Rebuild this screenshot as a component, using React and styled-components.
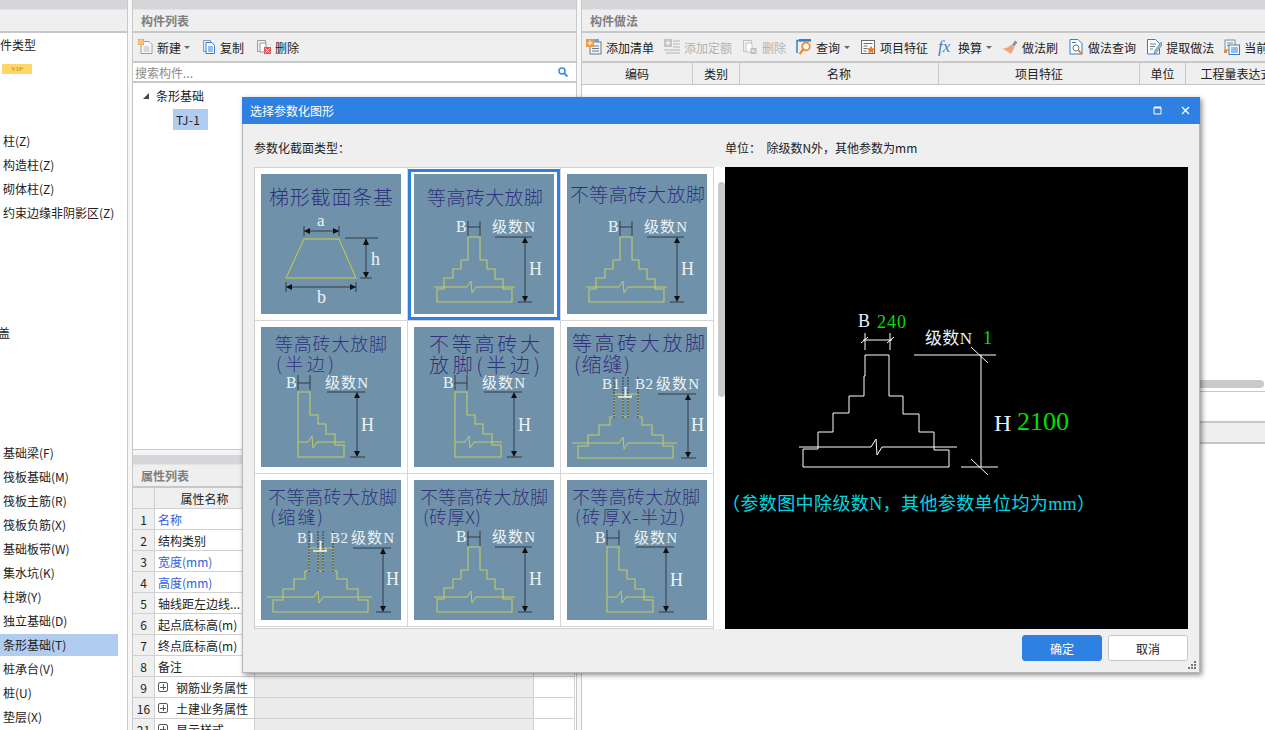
import React from 'react'
import styled, { createGlobalStyle } from 'styled-components'

const GlobalStyle = createGlobalStyle`
  html, body {
    margin: 0;
    padding: 0;
    background: #fff;
    overflow: hidden;
  }
  body {
    font-family: "Noto Sans CJK SC", sans-serif;
    font-size: 12px;
    color: #222;
  }
  * {
    box-sizing: border-box;
  }
`

/* ---------- toolbar icons ---------- */

const Ico = ({ children, w = 16 }) => (
  <svg width={w} height="16" viewBox="0 0 16 16" fill="none">{children}</svg>
)

const icons = {
  newDoc: (
    <Ico>
      <path d="M3 2.5h8l3 3v9H3z" fill="#fafafa" stroke="#9a9a9a" />
      <path d="M5.5 8h6M5.5 10h6M5.5 12h6" stroke="#b5b5b5" />
      <rect x="0" y="0" width="6" height="6" fill="#f29a2e" />
      <path d="M0 2h6M2 0v6M4 0v6M0 4h6" stroke="#fde3b5" strokeWidth=".7" />
    </Ico>
  ),
  copy: (
    <Ico>
      <path d="M1.5 1.5h7v11h-7z" fill="#eee" stroke="#8a9aac" />
      <path d="M4 3.5h6l2.5 3v8H4z" fill="#fff" stroke="#2f7fd6" />
      <path d="M6 8h5M6 10h5M6 12h5" stroke="#2f7fd6" />
    </Ico>
  ),
  del: (
    <Ico>
      <path d="M1.5 1.5h8v11h-8z" fill="#f2f2f2" stroke="#999" />
      <path d="M4 4h6v9H4z" fill="#fff" stroke="#999" />
      <rect x="8" y="8" width="7" height="7" fill="#e2575a" />
      <path d="M9.5 9.5l4 4M13.5 9.5l-4 4" stroke="#fff" />
    </Ico>
  ),
  addList: (
    <Ico>
      <rect x="4" y="3" width="11" height="12" fill="#f4f4f4" stroke="#6b7a88" />
      <path d="M6 7h7M6 9.500h7M6 12h7" stroke="#6b7a88" />
      <rect x="0" y="0" width="8" height="8" fill="#ef9a3c" />
      <rect x="8" y="0" width="5" height="3" fill="#6ea4dd" />
      <path d="M4 1.500v5M1.500 4h5" stroke="#fff" />
    </Ico>
  ),
  addQuota: (
    <Ico>
      <rect x="0" y="0" width="8" height="8" fill="#c4c4c4" />
      <path d="M4 1.500v5M1.500 4h5" stroke="#fff" />
      <path d="M9 2h7M9 5h7M9 8h7M0 11h16M2 14h14" stroke="#c9c9c9" strokeWidth="1.300" />
    </Ico>
  ),
  delOff: (
    <Ico>
      <path d="M1.500 1.500h8v11h-8z" fill="#f2f2f2" stroke="#c2c2c2" />
      <path d="M4 4h6v9H4z" fill="#fff" stroke="#c2c2c2" />
      <rect x="8.500" y="9" width="6" height="6" fill="#bbb" />
      <path d="M10 10.500l3 3M13 10.500l-3 3" stroke="#fff" />
    </Ico>
  ),
  query: (
    <Ico>
      <path d="M1 14V1.500h14" stroke="#2f7fd6" strokeWidth="1.500" />
      <rect x="3" y="0" width="12" height="2.500" fill="#2f7fd6" />
      <circle cx="10" cy="7.500" r="3.800" fill="#fff" stroke="#ee8a2c" strokeWidth="1.800" />
      <path d="M7.200 10.500L3.500 15" stroke="#ee8a2c" strokeWidth="2.200" />
    </Ico>
  ),
  feature: (
    <Ico>
      <rect x="1.500" y="1.500" width="13" height="13" fill="#fff" stroke="#6b6b6b" />
      <path d="M3.500 4.500h9M3.500 7h4M3.500 9.500h4M3.500 12h3" stroke="#6b6b6b" />
      <path d="M11 6.500l1.300 2.800 3 .3-2.200 2 .6 3-2.700-1.500-2.700 1.500.6-3-2.200-2 3-.3z" fill="#ee7a22" />
    </Ico>
  ),
  brush: (
    <Ico>
      <path d="M10 6l3-4.500 2.500 2L12 7.500z" fill="#8a8f96" />
      <path d="M9.500 5.500l3 3-3.500 6.500C6 13 3 11 .5 9.500 4 9.500 7 8 9.500 5.500z" fill="#f4a27a" />
    </Ico>
  ),
  lawQuery: (
    <Ico>
      <path d="M2 .5h8l4 4V15H2z" fill="#fff" stroke="#2f7fd6" />
      <path d="M4 3.500h4" stroke="#2f7fd6" />
      <circle cx="8" cy="9" r="3" stroke="#5d7890" />
      <path d="M10 11l2 2" stroke="#ee8a2c" strokeWidth="2" />
      <circle cx="13" cy="14" r="1.800" fill="#ee8a2c" />
    </Ico>
  ),
  extract: (
    <Ico>
      <path d="M1.500 .5h8l4 4V15h-12z" fill="#fff" stroke="#2f7fd6" />
      <path d="M4 5h6M4 7.500h5M4 10h3" stroke="#6b7a88" />
      <path d="M15.500 3L9 11l-1 4 3-2 5-7z" fill="#8ac0d8" stroke="#5d7890" strokeWidth=".6" />
    </Ico>
  ),
  current: (
    <Ico>
      <rect x="1" y="1" width="10" height="10" fill="#f4f4f4" stroke="#8a8a8a" />
      <path d="M3 4h6M3 6.500h3" stroke="#8a8a8a" />
      <rect x="5" y="6" width="10.500" height="9.500" fill="#fff" stroke="#2f7fd6" />
      <path d="M7 9h7M7 11h7M7 13h7" stroke="#2f7fd6" />
      <rect x="0" y="11" width="3" height="3" fill="#ee8a2c" />
    </Ico>
  ),
}

/* ---------- page frame ---------- */

const Page = styled.div`
  position: relative;
  display: flex;
  width: 1265px;
  height: 730px;
  overflow: hidden;
  background: #fff;
`

const Pane = styled.section`
  display: flex;
  flex-direction: column;
  flex: ${(p) => (p.$width ? `0 0 ${p.$width}px` : '1 1 auto')};
  min-width: 0;
  height: 100%;
  overflow: hidden;
  border-right: ${(p) => (p.$edge ? '1px solid #c8c8c8' : 'none')};
  border-left: ${(p) => (p.$edgeLeft ? '1px solid #c8c8c8' : 'none')};
`

const Splitter = styled.div`
  flex: 0 0 ${(p) => p.$width}px;
  background: #f7f7f7;
`

const Band = styled.div`
  flex: 0 0 ${(p) => p.$height || 9}px;
  background: #d4d6da;
`

const PanelTitle = styled.div`
  flex: 0 0 24px;
  display: flex;
  align-items: center;
  padding-left: 8px;
  background: #efefef;
  border-top: 1px solid #e4e4e4;
  border-bottom: 2px solid #c8c8c8;
  color: #7f7f7f;
  font-weight: 700;
  font-size: 12px;
`

/* ---------- left list ---------- */

const SideList = styled.ul`
  list-style: none;
  margin: 0;
  padding: 0;
`

const SideRow = styled.li`
  display: flow-root;
  height: 24px;
  width: 118px;
  padding-left: 3px;
  line-height: 24px;
  text-indent: ${(p) => p.$indent || 0}px;
  white-space: nowrap;
  background: ${(p) => (p.$active ? 'linear-gradient(#fff 0 1px, #b0ccee 1px 23px, #fff 23px)' : 'none')};
`

const Vip = styled.span`
  display: flex;
  align-items: center;
  justify-content: center;
  width: 30px;
  height: 10px;
  margin: 7px 0 0 -1px;
  background: #fdd768;
  color: #c9a03c;
  font-family: "Liberation Serif", serif;
  font-size: 7px;
  font-weight: 700;
  text-indent: 0;
  line-height: 10px;
`

/* ---------- toolbar ---------- */

const Toolbar = styled.div`
  flex: 0 0 ${(p) => p.$height || 30}px;
  display: flex;
  align-items: center;
  gap: ${(p) => p.$gap || 10}px;
  padding-left: ${(p) => p.$pad || 4}px;
  background: #efefef;
  border-bottom: 2px solid #c8c8c8;
  white-space: nowrap;
`

const Tool = styled.span`
  display: inline-flex;
  align-items: center;
  gap: ${(p) => p.$gap || 4}px;
  color: ${(p) => (p.$off ? '#b2b2b2' : '#222')};
`

const Caret = styled.i`
  display: inline-block;
  width: 0;
  height: 0;
  border-left: 3px solid transparent;
  border-right: 3px solid transparent;
  border-top: 3px solid #666;
`

const FxMark = styled.span`
  width: 16px;
  color: #3f80c8;
  font-family: "Liberation Serif", serif;
  font-style: italic;
  font-size: 17px;
  line-height: 16px;
`

/* ---------- middle pane ---------- */

const SearchBar = styled.div`
  flex: 0 0 20px;
  display: flex;
  align-items: center;
  justify-content: space-between;
  padding: 0 8px 0 2px;
  border-bottom: 2px solid #c8c8c8;
  color: #8a8a8a;
`

const Tree = styled.div`
  flex: 0 0 367px;
  padding: 2px 0 0 10px;
  border-bottom: 1px solid #c8c8c8;
`

const TreeRoot = styled.div`
  display: flex;
  align-items: center;
  gap: 7px;
  height: 21px;
`

const TreeArrow = styled.i`
  display: inline-block;
  width: 0;
  height: 0;
  margin-top: 1px;
  border-left: 6px solid transparent;
  border-bottom: 6px solid #444;
`

const TreeLeaf = styled.div`
  display: flex;
  align-items: center;
  width: 35px;
  height: 21px;
  margin: 3px 0 0 30px;
  padding-left: 3px;
  background: #b0ccee;
  letter-spacing: .4px;
`

const PaneGap = styled.div`
  flex: 0 0 5px;
  background: #f4f4f4;
`

const PropTable = styled.div`
  display: grid;
  grid-template-columns: 22px 100px 279px 41px;
  grid-auto-rows: 21px;
`

const PropCell = styled.div`
  display: flex;
  align-items: center;
  gap: 8px;
  justify-content: ${(p) => (p.$center ? 'center' : 'flex-start')};
  padding-left: ${(p) => (p.$center ? 0 : 3)}px;
  background: ${(p) => p.$bg || '#fff'};
  color: ${(p) => p.$color || '#222'};
  border-right: 1px solid #d0d0d0;
  border-bottom: 1px solid #d0d0d0;
  white-space: nowrap;
  overflow: hidden;
`

const PlusBox = styled.i`
  flex: 0 0 10px;
  height: 10px;
  border: 1px solid #555;
  border-radius: 2px;
  background:
    linear-gradient(#555, #555) center / 6px 1px no-repeat,
    linear-gradient(#555, #555) center / 1px 6px no-repeat;
`

/* ---------- right pane ---------- */

const GridHead = styled.div`
  flex: 0 0 22px;
  display: grid;
  grid-template-columns: 111px 47px 199px 201px 46px 102px;
  background: #efefef;
  border-bottom: 1px solid #c8c8c8;
`

const HeadCell = styled.div`
  display: flex;
  align-items: center;
  justify-content: center;
  border-right: 1px solid #c8c8c8;
  white-space: nowrap;
`

const GridBody = styled.div`
  flex: 0 0 295px;
`

const ScrollTrack = styled.div`
  flex: 0 0 12px;
  padding-right: 1px;
  border-bottom: 1px solid #c8c8c8;
`

const ScrollThumb = styled.div`
  height: 8px;
  background: #cacaca;
  border-radius: 4px;
`

const SubBody = styled.div`
  flex: 0 0 29px;
`

const SubBand = styled.div`
  flex: 0 0 23px;
  background: #efefef;
  border-top: 2px solid #c5c9cc;
  border-bottom: 2px solid #c8c8c8;
`

/* ---------- dialog ---------- */

const Dialog = styled.div`
  position: absolute;
  left: 242px;
  top: 97px;
  width: 958px;
  height: 576px;
  display: flex;
  flex-direction: column;
  background: #efefef;
  border: 1px solid #b4b8be;
  border-top: none;
  box-shadow: 2px 2px 5px rgba(0, 0, 0, .45);
`

const DialogHead = styled.header`
  flex: 0 0 27px;
  display: flex;
  align-items: center;
  margin: 0 -1px;
  padding: 0 9px 0 8px;
  background: #2f80e3;
  color: #fff;
`

const DialogTitle = styled.span`
  flex: 1;
`

const WinButton = styled.span`
  display: flex;
  align-items: center;
  justify-content: center;
  width: 12px;
  margin-left: 16px;
`

const DialogLabels = styled.div`
  flex: 0 0 43px;
  display: grid;
  grid-template-columns: 471px 1fr;
  align-items: center;
  padding: 4px 11px 0;
`

const DialogMain = styled.div`
  flex: 0 0 462px;
  display: grid;
  grid-template-columns: 471px 463px;
  padding-left: 11px;
`

const Picker = styled.div`
  display: flex;
  background: #fff;
`

const PickerGrid = styled.div`
  display: grid;
  grid-template-columns: repeat(3, 153px);
  grid-auto-rows: 153px;
  align-content: start;
  width: 460px;
  height: 462px;
  border: 1px solid #cfcfcf;
  border-bottom-width: 3px;
  border-bottom-style: double;
`

const PickerCell = styled.div`
  padding-top: 1px;
  border-right: 1px solid #d6d6d6;
  border-bottom: 1px solid #d6d6d6;
`

const PickerFrame = styled.div`
  width: 152px;
  height: 151px;
  padding: 2px 3px 0;
  border: 3px solid ${(p) => (p.$selected ? '#2f7fe0' : 'transparent')};
  svg {
    display: block;
  }
`

const PickerScroll = styled.div`
  flex: 0 0 11px;
  padding: 15px 0 0 4px;
`

const PickerThumb = styled.div`
  width: 7px;
  height: 215px;
  background: #cacaca;
  border-radius: 4px;
`

const Preview = styled.svg`
  display: block;
  background: #000;
`

const DialogFoot = styled.footer`
  position: relative;
  flex: 1;
  display: flex;
  justify-content: flex-end;
  gap: 6px;
  padding: 6px 11px 0 0;
`

const Btn = styled.button`
  width: 80px;
  height: 26px;
  padding: 0;
  font: inherit;
  font-size: 12px;
  color: ${(p) => (p.$primary ? '#fff' : '#222')};
  background: ${(p) => (p.$primary ? '#2f80e3' : '#fff')};
  border: 1px solid ${(p) => (p.$primary ? '#2f80e3' : '#c8c8c8')};
  border-radius: 3px;
`

const Grip = styled.svg`
  position: absolute;
  right: 2px;
  bottom: 2px;
`

/* ---------- svg text ---------- */

const ThumbTitle = styled.text`
  font-family: "Noto Sans CJK SC", sans-serif;
  font-size: ${(p) => p.$size || 18}px;
  font-weight: 300;
  fill: #2c2a78;
  fill-opacity: .94;
`

const ThumbLabel = styled.text`
  font-family: "Liberation Serif", "Noto Sans CJK SC", serif;
  font-size: ${(p) => p.$size || 15}px;
  fill: #eef2f4;
`

const CadLabel = styled.text`
  font-family: "Liberation Serif", "Noto Sans CJK SC", serif;
  font-size: ${(p) => p.$size || 18}px;
  fill: ${(p) => p.$color || '#e6f0f8'};
`

/* ---------- thumbnails ---------- */

const LINE = '#c3cb62'
const DIM = '#2f3a44'

const shift = (pts, dx, dy) => pts.map(([x, y]) => `${x + dx},${y + dy}`).join(' ')

const FULL = [[54, 63], [54, 86], [47, 86], [47, 95], [39, 95], [39, 104], [30, 104], [30, 115], [23, 115], [23, 128], [98, 128], [98, 115], [89, 115], [89, 105], [81, 105], [81, 95], [73, 95], [73, 86], [66, 86], [66, 63]]
const HALF = [[41, 65], [41, 130], [87, 130], [87, 118], [78, 118], [78, 107], [69, 107], [69, 97], [61, 97], [61, 88], [53, 88], [53, 65]]
const GAP = [[47, 67], [47, 90], [43, 90], [43, 98], [32, 98], [32, 108], [21, 108], [21, 119], [11, 119], [11, 131], [106, 131], [106, 119], [96, 119], [96, 108], [85, 108], [85, 98], [75, 98], [75, 90], [71, 90], [71, 67]]

const Level = ({ x, top, bottom, left, right }) => (
  <g stroke={DIM}>
    <path d={`M${x} ${top + 2}V${bottom - 2}`} />
    <path d={`M${left} ${bottom}H${right}`} />
    <path d={`M${x - 3} ${top + 6}L${x} ${top}L${x + 3} ${top + 6}z`} fill="#111" stroke="none" />
    <path d={`M${x - 3} ${bottom - 6}L${x} ${bottom}L${x + 3} ${bottom - 6}z`} fill="#111" stroke="none" />
  </g>
)

const BreakLine = ({ from, to, at, y }) => (
  <polyline
    points={`${from},${y} ${at - 3},${y} ${at + 1},${y - 6} ${at + 2},${y + 6} ${at + 6},${y} ${to},${y}`}
    fill="none"
    stroke={LINE}
  />
)

const FullDrawing = ({ dx = 0, dy = 0 }) => (
  <g>
    <polygon points={shift(FULL, dx, dy)} fill="none" stroke={LINE} strokeWidth="1.100" />
    <BreakLine from={20 + dx} to={101 + dx} at={56 + dx} y={113 + dy} />
    <path d={`M${54 + dx} ${47 + dy}V${62 + dy}M${66 + dx} ${47 + dy}V${62 + dy}M${54 + dx} ${53 + dy}H${66 + dx}`} stroke={DIM} fill="none" />
    <ThumbLabel x={42 + dx} y={58 + dy} $size={16}>B</ThumbLabel>
    <ThumbLabel x={78 + dx} y={58 + dy} textLength="43" $size={15}>级数N</ThumbLabel>
    <path d={`M${81 + dx} ${63 + dy}H${118 + dx}`} stroke={DIM} />
    <Level x={111 + dx} top={63 + dy} bottom={128 + dy} left={104 + dx} right={118 + dx} />
    <ThumbLabel x={115 + dx} y={101 + dy} $size={18}>H</ThumbLabel>
  </g>
)

const HalfDrawing = ({ dx = 0, dy = 0 }) => (
  <g>
    <polygon points={shift(HALF, dx, dy)} fill="none" stroke={LINE} strokeWidth="1.100" />
    <BreakLine from={41 + dx} to={88 + dx} at={54 + dx} y={115 + dy} />
    <path d={`M${41 + dx} ${48 + dy}V${63 + dy}M${53 + dx} ${48 + dy}V${63 + dy}M${41 + dx} ${56 + dy}H${53 + dx}`} stroke={DIM} fill="none" />
    <ThumbLabel x={29 + dx} y={61 + dy} $size={16}>B</ThumbLabel>
    <ThumbLabel x={68 + dx} y={61 + dy} textLength="43" $size={15}>级数N</ThumbLabel>
    <path d={`M${70 + dx} ${65 + dy}H${108 + dx}`} stroke={DIM} />
    <Level x={100 + dx} top={65 + dy} bottom={130 + dy} left={93 + dx} right={108 + dx} />
    <ThumbLabel x={104 + dx} y={104 + dy} $size={18}>H</ThumbLabel>
  </g>
)

const GapDrawing = ({ dx = 0, dy = 0 }) => (
  <g>
    <polygon points={shift(GAP, dx, dy)} fill="none" stroke={LINE} strokeWidth="1.100" />
    <polygon points={shift([[56, 67], [56, 90], [61, 90], [61, 67]], dx, dy)} fill="none" stroke={LINE} />
    <BreakLine from={5 + dx} to={110 + dx} at={55 + dx} y={116 + dy} />
    <path d={`M${47 + dx} ${50 + dy}V${92 + dy}M${56 + dx} ${50 + dy}V${92 + dy}M${61 + dx} ${50 + dy}V${92 + dy}M${71 + dx} ${50 + dy}V${92 + dy}`} stroke={DIM} strokeDasharray="2 1" />
    <path d={`M${51 + dx} ${70 + dy}H${65 + dx}`} stroke="#fff" strokeWidth="1.300" />
    <ThumbLabel x={35 + dx} y={62 + dy} textLength="18" $size={15}>B1</ThumbLabel>
    <ThumbLabel x={68 + dx} y={62 + dy} textLength="18" $size={15}>B2</ThumbLabel>
    <ThumbLabel x={56 + dx} y={70 + dy} $size={15}>L</ThumbLabel>
    <ThumbLabel x={89 + dx} y={62 + dy} textLength="43" $size={15}>级数N</ThumbLabel>
    <path d={`M${91 + dx} ${67 + dy}H${129 + dx}`} stroke={DIM} />
    <Level x={121 + dx} top={67 + dy} bottom={131 + dy} left={114 + dx} right={129 + dx} />
    <ThumbLabel x={124 + dx} y={104 + dy} $size={18}>H</ThumbLabel>
  </g>
)

const TrapDrawing = () => (
  <g>
    <polygon points="43,65 78,65 95,104 25,104" fill="none" stroke="#cdd040" />
    <path d="M43 52V62M78 52V62M43 57H78M84 64H117M99 104H111M25 108V118M95 108V118M25 113H95" stroke={DIM} fill="none" />
    <path d="M105 66V103" stroke={DIM} />
    <path d="M102 71L105 64L108 71zM102 98L105 104L108 98zM43 57L49 54V60zM78 57L72 54V60zM25 113L31 110V116zM95 113L89 110V116z" fill="#111" />
    <ThumbLabel x={56} y={52} $size={17}>a</ThumbLabel>
    <ThumbLabel x={110} y={91} $size={18}>h</ThumbLabel>
    <ThumbLabel x={56} y={129} $size={18}>b</ThumbLabel>
  </g>
)

const DRAWINGS = { trap: TrapDrawing, full: FullDrawing, half: HalfDrawing, gap: GapDrawing }

const THUMBS = [
  { kind: 'trap', lines: [['梯形截面条基', 8, 31, 124, 20]] },
  { kind: 'full', selected: true, lines: [['等高砖大放脚', 13, 31, 116, 19]] },
  { kind: 'full', dx: -1, lines: [['不等高砖大放脚', 3, 28, 135, 19]] },
  { kind: 'half', dx: -4, lines: [['等高砖大放脚', 14, 24, 112, 18], ['(半边)', 15, 44, 58, 18]] },
  { kind: 'half', lines: [['不等高砖大', 15, 25, 111, 20], ['放脚(半边)', 15, 46, 111, 20]] },
  { kind: 'gap', lines: [['等高砖大放脚', 5, 24, 133, 20], ['(缩缝)', 7, 45, 56, 20]] },
  { kind: 'gap', dx: 1, dy: 1, lines: [['不等高砖大放脚', 7, 24, 129, 18], ['(缩缝)', 9, 44, 53, 18]] },
  { kind: 'full', dy: 4, lines: [['不等高砖大放脚', 6, 24, 128, 18], ['(砖厚X)', 9, 44, 58, 18]] },
  { kind: 'half', dx: -1, dy: 2, lines: [['不等高砖大放脚', 5, 24, 128, 18], ['(砖厚X-半边)', 8, 44, 110, 18]] },
]

const Thumb = ({ kind, dx, dy, lines }) => {
  const Drawing = DRAWINGS[kind]
  return (
    <svg width="140" height="140" viewBox="0 0 140 140">
      <rect width="140" height="140" fill="#6f92aa" />
      {lines.map(([text, x, y, w, size]) => (
        <ThumbTitle key={text} x={x} y={y} textLength={w} lengthAdjust="spacing" $size={size}>{text}</ThumbTitle>
      ))}
      <Drawing dx={dx} dy={dy} />
    </svg>
  )
}

const CadPreview = () => (
  <Preview width="463" height="462" viewBox="0 0 463 462">
    <g stroke="#fff" fill="none">
      <polygon points="140,188 140,209 139,209 139,229 124,229 124,246 108,246 108,265 93,265 93,282 78,282 78,300 224,300 224,283 209,283 209,265 194,265 194,247 178,247 178,229 164,229 164,188" />
      <polyline points="74,280 146,280 151,272 152,288 157,280 232,280" />
      <path d="M140 166V183M165 166V183M138 173H167M136 176L143 170M162 176L169 170" />
      <path d="M189 188H271M256 188V300M236 300H273M246 180L263 196M246 292L263 308" />
    </g>
    <CadLabel x={133} y={160} $size={18}>B</CadLabel>
    <CadLabel x={152} y={161} $size={18} textLength="29" $color="#00e000">240</CadLabel>
    <CadLabel x={200} y={177} $size={17} textLength="47">级数N</CadLabel>
    <CadLabel x={258} y={177} $size={18} $color="#00e000">1</CadLabel>
    <CadLabel x={269} y={264} $size={24}>H</CadLabel>
    <CadLabel x={292} y={263} $size={26} textLength="52" $color="#00e000">2100</CadLabel>
    <CadLabel x={-3} y={343} $size={18} textLength="373" lengthAdjust="spacing" $color="#00d8e0">（参数图中除级数N，其他参数单位均为mm）</CadLabel>
  </Preview>
)

/* ---------- data ---------- */

const SIDE = [
  { text: '构件类型', indent: -15 },
  { vip: true },
  {}, {},
  { text: '柱(Z)' },
  { text: '构造柱(Z)' },
  { text: '砌体柱(Z)' },
  { text: '约束边缘非阴影区(Z)' },
  {}, {}, {}, {},
  { text: '盖', indent: -5 },
  {}, {}, {}, {},
  { text: '基础梁(F)' },
  { text: '筏板基础(M)' },
  { text: '筏板主筋(R)' },
  { text: '筏板负筋(X)' },
  { text: '基础板带(W)' },
  { text: '集水坑(K)' },
  { text: '柱墩(Y)' },
  { text: '独立基础(D)' },
  { text: '条形基础(T)', active: true },
  { text: '桩承台(V)' },
  { text: '桩(U)' },
  { text: '垫层(X)' },
]

const PROPS = [
  ['1', '名称', '#2a62e0'],
  ['2', '结构类别'],
  ['3', '宽度(mm)', '#2a62e0'],
  ['4', '高度(mm)', '#2a62e0'],
  ['5', '轴线距左边线...'],
  ['6', '起点底标高(m)'],
  ['7', '终点底标高(m)'],
  ['8', '备注'],
  ['9', '钢筋业务属性', null, true],
  ['16', '土建业务属性', null, true],
  ['21', '显示样式', null, true],
]

const COLUMNS = ['编码', '类别', '名称', '项目特征', '单位', '工程量表达式']

const App = () => {
  return (
    <React.Fragment>
      <GlobalStyle />
      <Page>
        <Pane $width={128} $edge>
          <Band />
          <PanelTitle />
          <SideList>
            {SIDE.map((row, i) => (
              <SideRow key={i} $indent={row.indent} $active={row.active}>
                {row.vip ? <Vip>VIP</Vip> : row.text}
              </SideRow>
            ))}
          </SideList>
        </Pane>
        <Splitter $width={4} />
        <Pane $width={445} $edge $edgeLeft>
          <Band />
          <PanelTitle>构件列表</PanelTitle>
          <Toolbar $gap={12} $pad={5}>
            <Tool $gap={3}>{icons.newDoc}新建<Caret /></Tool>
            <Tool $gap={2}>{icons.copy}复制</Tool>
            <Tool $gap={3}>{icons.del}删除</Tool>
          </Toolbar>
          <SearchBar>
            搜索构件...
            <svg width="10" height="10" viewBox="0 0 10 10" fill="none">
              <circle cx="4" cy="4" r="3" stroke="#3b8ad8" strokeWidth="1.500" />
              <path d="M6.500 6.500L9.500 9.500" stroke="#3b8ad8" strokeWidth="1.800" />
            </svg>
          </SearchBar>
          <Tree>
            <TreeRoot><TreeArrow />条形基础</TreeRoot>
            <TreeLeaf>TJ-1</TreeLeaf>
          </Tree>
          <PaneGap />
          <Band />
          <PanelTitle>属性列表</PanelTitle>
          <PropTable>
            <PropCell $bg="#efefef" />
            <PropCell $bg="#efefef" $center>属性名称</PropCell>
            <PropCell $bg="#efefef" $center>属性值</PropCell>
            <PropCell $bg="#efefef" $center>附加</PropCell>
            {PROPS.map(([no, name, color, group]) => (
              <React.Fragment key={no}>
                <PropCell $bg="#efefef" $center>{no}</PropCell>
                <PropCell $color={color}>
                  {group && <PlusBox />}
                  {name}
                </PropCell>
                <PropCell $bg={group ? '#ebebeb' : '#fff'} />
                <PropCell />
              </React.Fragment>
            ))}
          </PropTable>
        </Pane>
        <Splitter $width={4} />
        <Pane $edgeLeft>
          <Band />
          <PanelTitle>构件做法</PanelTitle>
          <Toolbar>
            <Tool>{icons.addList}添加清单</Tool>
            <Tool $off>{icons.addQuota}添加定额</Tool>
            <Tool $off>{icons.delOff}删除</Tool>
            <Tool>{icons.query}查询<Caret /></Tool>
            <Tool>{icons.feature}项目特征</Tool>
            <Tool><FxMark>fx</FxMark>换算<Caret /></Tool>
            <Tool>{icons.brush}做法刷</Tool>
            <Tool>{icons.lawQuery}做法查询</Tool>
            <Tool>{icons.extract}提取做法</Tool>
            <Tool>{icons.current}当前构件自动套做法</Tool>
          </Toolbar>
          <GridHead>
            {COLUMNS.map((col) => <HeadCell key={col}>{col}</HeadCell>)}
          </GridHead>
          <GridBody />
          <ScrollTrack><ScrollThumb /></ScrollTrack>
          <SubBody />
          <SubBand />
        </Pane>

        <Dialog>
          <DialogHead>
            <DialogTitle>选择参数化图形</DialogTitle>
            <WinButton>
              <svg width="9" height="9" viewBox="0 0 9 9" fill="none">
                <path d="M1 1.500H8V8H1z" stroke="#fff" />
                <path d="M1 1.500H8" stroke="#fff" strokeWidth="2" />
              </svg>
            </WinButton>
            <WinButton>
              <svg width="9" height="9" viewBox="0 0 9 9" fill="none">
                <path d="M1 1L8 8M8 1L1 8" stroke="#fff" strokeWidth="1.300" />
              </svg>
            </WinButton>
          </DialogHead>
          <DialogLabels>
            <span>参数化截面类型：</span>
            <span>单位：&nbsp;&nbsp;除级数N外，其他参数为mm</span>
          </DialogLabels>
          <DialogMain>
            <Picker>
              <PickerGrid>
                {THUMBS.map((thumb, i) => (
                  <PickerCell key={i}>
                    <PickerFrame $selected={thumb.selected}>
                      <Thumb {...thumb} />
                    </PickerFrame>
                  </PickerCell>
                ))}
              </PickerGrid>
              <PickerScroll><PickerThumb /></PickerScroll>
            </Picker>
            <CadPreview />
          </DialogMain>
          <DialogFoot>
            <Btn $primary>确定</Btn>
            <Btn>取消</Btn>
            <Grip width="9" height="9" viewBox="0 0 9 9" fill="#777">
              <rect x="6" y="0" width="2" height="2" />
              <rect x="3" y="3" width="2" height="2" />
              <rect x="6" y="3" width="2" height="2" />
              <rect x="0" y="6" width="2" height="2" />
              <rect x="3" y="6" width="2" height="2" />
              <rect x="6" y="6" width="2" height="2" />
            </Grip>
          </DialogFoot>
        </Dialog>
      </Page>
    </React.Fragment>
  )
}

export default App
